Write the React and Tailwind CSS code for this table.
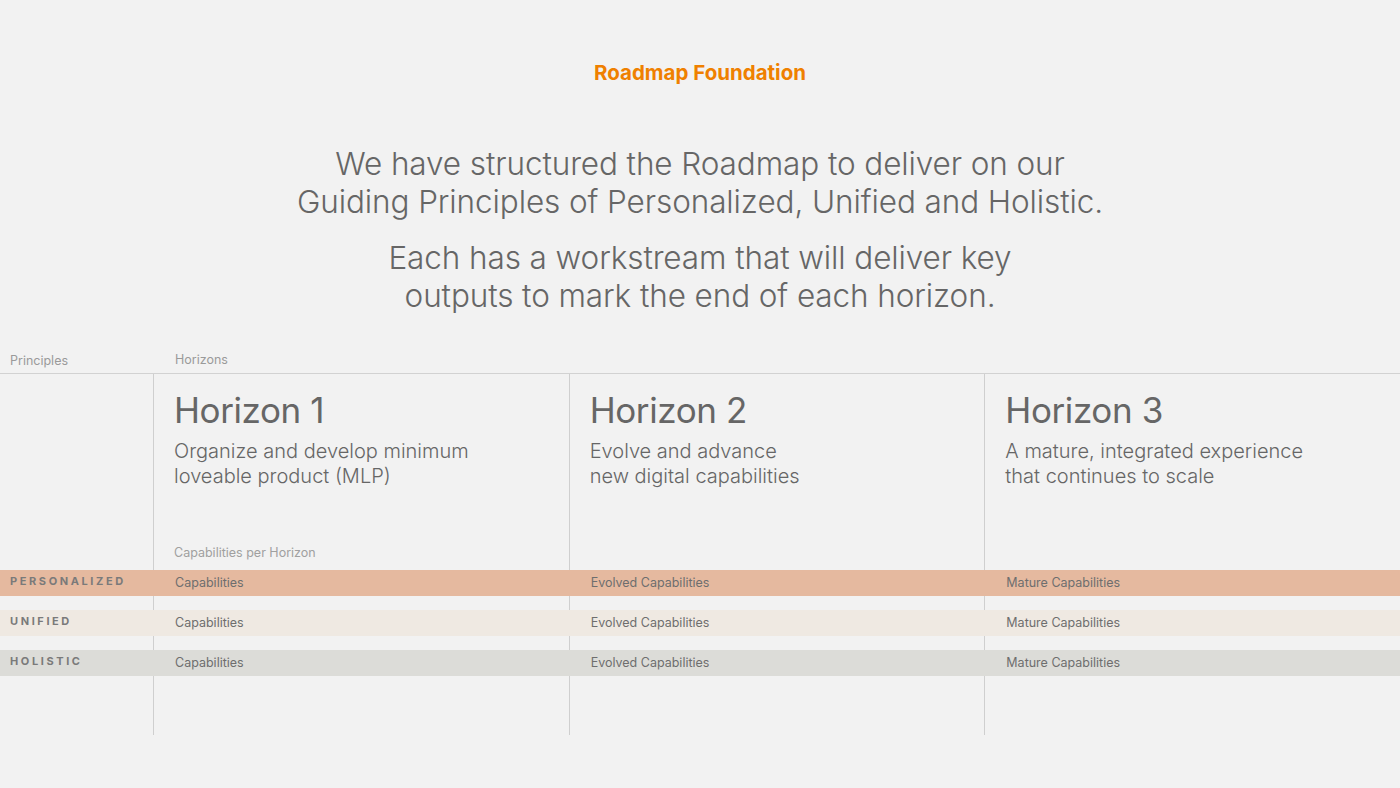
export default function App() {
  const font = { fontFamily: 'Inter, "Noto Sans", sans-serif' };
  const horizons = [
    { t: "Horizon 1", s: ["Organize and develop minimum", "loveable product (MLP)"], cap: true },
    { t: "Horizon 2", s: ["Evolve and advance", "new digital capabilities"] },
    { t: "Horizon 3", s: ["A mature, integrated experience", "that continues to scale"] },
  ];
  const bands = [
    { label: "PERSONALIZED", bg: "bg-[#e5b99f]" },
    { label: "UNIFIED", bg: "bg-[#efe9e2]" },
    { label: "HOLISTIC", bg: "bg-[#dcdcd8]" },
  ];
  const vals = ["Capabilities", "Evolved Capabilities", "Mature Capabilities"];
  const Gap = ({ h }) => (
    <div className={`grid grid-cols-[153px_1fr_1fr_1fr] ${h}`}>
      <div />
      <div className="border-l border-[#cfcfcf]" />
      <div className="border-l border-[#cfcfcf]" />
      <div className="border-l border-[#cfcfcf]" />
    </div>
  );
  return (
    <div className="w-[1400px] h-[788px] bg-[#f2f2f2] text-[#666] overflow-hidden" style={font}>
      <div className="flex flex-col items-center">
        <div className="mt-[60px] text-[20.5px] font-bold text-[#ef8000] leading-[26px]">Roadmap Foundation</div>
        <div className="mt-[59px] text-[31.5px] font-light leading-[38px] text-center tracking-[-0.1px]">
          We have structured the Roadmap to deliver on our
          <br />
          Guiding Principles of Personalized, Unified and Holistic.
        </div>
        <div className="mt-[18px] text-[31.5px] font-light leading-[38px] text-center tracking-[-0.1px]">
          Each has a workstream that will deliver key
          <br />
          outputs to mark the end of each horizon.
        </div>
      </div>
      <div className="mt-[27px] grid grid-cols-[153px_1fr_1fr_1fr] h-[32px] items-center text-[12.5px] text-[#9a9a9a] border-b border-[#d2d2d2]">
        <div className="pl-[10px] pt-[8px]">Principles</div>
        <div className="pl-[22px] pt-[6px]">Horizons</div>
        <div />
        <div />
      </div>
      <div className="grid grid-cols-[153px_1fr_1fr_1fr] h-[196px]">
        <div />
        {horizons.map((h) => (
          <div key={h.t} className="border-l border-[#cfcfcf] pl-[20px] pt-[15px] flex flex-col">
            <div className="text-[35px] leading-[42px] tracking-[-0.4px]">{h.t}</div>
            <div className="mt-[8px] text-[20px] leading-[25px] font-light">
              {h.s[0]}
              <br />
              {h.s[1]}
            </div>
            {h.cap && <div className="mt-auto mb-[7px] text-[12.5px] text-[#a0a0a0]">Capabilities per Horizon</div>}
          </div>
        ))}
      </div>
      {bands.map((b, i) => (
        <div key={b.label}>
          <div className={`grid grid-cols-[153px_1fr_1fr_1fr] h-[26px] items-center ${b.bg}`}>
            <div className="pl-[10px] text-[11px] font-bold tracking-[2.6px] text-[#7a7a7a] -mt-[4px]">{b.label}</div>
            {vals.map((v) => (
              <div key={v} className="pl-[22px] text-[12.5px] text-[#6e6e6e]">{v}</div>
            ))}
          </div>
          {i < 2 && <Gap h="h-[14px]" />}
        </div>
      ))}
      <Gap h="h-[59px]" />
    </div>
  );
}
